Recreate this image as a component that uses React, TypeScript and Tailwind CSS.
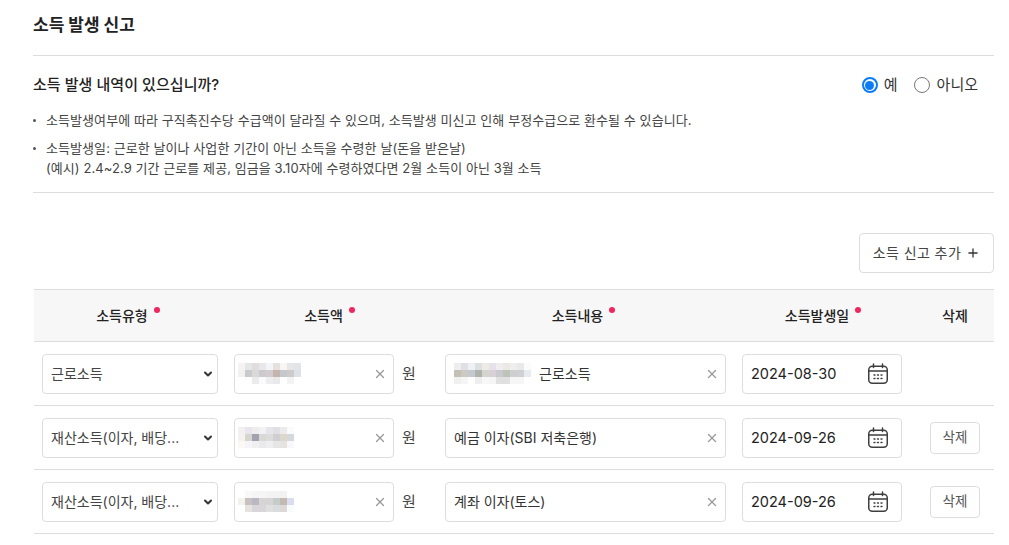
import { ChevronDown, Plus, X } from 'lucide-react';

const headers = [
  { label: '소득유형', required: true },
  { label: '소득액', required: true },
  { label: '소득내용', required: true },
  { label: '소득발생일', required: true },
  { label: '삭제', required: false },
];

const mosaic1 = [
  ['#f5f3f3', '#e5e6e8', '#e3dcdc', '#e8e8ea', '#f2f4f7', '#e6e0e0', '#f7f6f2', '#e6e6e6', '#e2e5e8'],
  ['#f3f1f0', '#c9cacb', '#d9d9da', '#cec9cd', '#d2cccf', '#c3b5ae', '#c5c9cb', '#cccccc', '#dde2e6'],
  ['#ffffff', '#fdfdfd', '#ebebee', '#fafafa', '#edecee', '#e9e8ea', '#ffffff', '#f3f3f3', '#ffffff'],
];
const mosaic2 = [
  ['#f5f0f0', '#e6e6ec', '#f0ecec', '#f0f2f5', '#e5e5ea', '#dfdfe4', '#eceaea', '#fbfbfd', '#ffffff'],
  ['#f4f2ee', '#d8d4d0', '#a3a3b0', '#d8d8d4', '#dcdcdc', '#d0d0d4', '#dcd8cc', '#d5d9dc', '#ffffff'],
  ['#fdf8f4', '#f5f5f8', '#f0f0f0', '#e8eaec', '#eeeeee', '#e6e6e6', '#e5e3e0', '#f8f8fb', '#ffffff'],
];
const mosaic3 = [
  ['#ffffff', '#f8f8f8', '#f5f5f5', '#f5f5f5', '#f3f3f3', '#f3f3f3', '#f3f1f1', '#ffffff', '#ffffff'],
  ['#f3f3ee', '#c9c0c0', '#bbb8c5', '#d8d4d4', '#d5d5d5', '#c5cdca', '#c5b9b4', '#dcdcf0', '#ffffff'],
  ['#ffffff', '#e6e2e0', '#d9d6da', '#d8d6da', '#dfe0e0', '#dadde0', '#dcd8d5', '#f8fcfc', '#ffffff'],
];
const mosaic4 = [
  ['#eeeeee', '#e0dfe6', '#eef0f4', '#dde0e0', '#ecece4', '#e6e2ec', '#eeeeee', '#ece9e4', '#eeeeee', '#e9e9e9', '#fbfbfb'],
  ['#c4c0b6', '#cdcac4', '#c3c9d0', '#aeb3ab', '#d5d5cf', '#d8d0d6', '#c9c9cf', '#bcc3b9', '#cfcfcf', '#d0d0d4', '#e8ecf0'],
  ['#f0f0f0', '#f5f5f5', '#fefefe', '#eeeeee', '#f8f8f8', '#f5f5f5', '#e0e0e0', '#e0e0e0', '#f6f6f6', '#f6f6f6', '#ffffff'],
];

const rows = [
  { type: '근로소득', amount: mosaic1, content: '근로소득', contentMosaic: true, date: '2024-08-30', deletable: false },
  { type: '재산소득(이자, 배당...', amount: mosaic2, content: '예금 이자(SBI 저축은행)', contentMosaic: false, date: '2024-09-26', deletable: true },
  { type: '재산소득(이자, 배당...', amount: mosaic3, content: '계좌 이자(토스)', contentMosaic: false, date: '2024-09-26', deletable: true },
];

function Mosaic({ cells }: { cells: string[][] }) {
  return (
    <div className="flex flex-col">
      {cells.map((row, i) => (
        <div key={i} className="flex">
          {row.map((color, j) => (
            <div key={j} className="w-[7px] h-[7px]" style={{ backgroundColor: color }} />
          ))}
        </div>
      ))}
    </div>
  );
}

function CalendarIcon() {
  return (
    <svg width="22" height="22" viewBox="0 0 22 22" fill="none" stroke="#3f3f3f" strokeWidth="1.5" strokeLinecap="round">
      <rect x="1.75" y="3.25" width="18.5" height="17" rx="3.5" />
      <path d="M2 8h18" />
      <path d="M6.5 1v3.5M15.5 1v3.5" />
      <path d="M7 12h1M10.5 12h1M14 12h1M7 15.5h1M10.5 15.5h1M14 15.5h1" strokeWidth="1.4" />
    </svg>
  );
}

function ClearIcon() {
  return <X className="w-[14px] h-[14px] text-[#999999] shrink-0" strokeWidth={2.2} />;
}

function Bullet() {
  return (
    <span className="w-[13px] h-[20px] shrink-0 flex items-center">
      <span className="w-[3px] h-[3px] rounded-full bg-[#555555]" />
    </span>
  );
}

export default function App() {
  return (
    <div className="w-[1009px] h-[545px] overflow-hidden bg-white pl-[33px] pr-[15px] font-['Inter','Noto_Sans_CJK_KR',sans-serif] text-[#333333]">
      <h2 className="h-[56px] pt-[11px] border-b border-[#dddddd] text-[17px] leading-[28px] font-bold text-[#222222]">소득 발생 신고</h2>

      <div className="flex items-center justify-between h-[28px] mt-[15px]">
        <p className="text-[15px] font-medium text-[#222222] tracking-[0.05px]">소득 발생 내역이 있으십니까?</p>
        <div className="flex items-center text-[15px] mr-[16px]">
          <span className="w-4 h-4 rounded-full border-2 border-[#0b7cf5] flex items-center justify-center">
            <span className="w-[9px] h-[9px] rounded-full bg-[#0b7cf5]" />
          </span>
          <span className="ml-[6px] mr-[16px]">예</span>
          <span className="w-4 h-4 rounded-full border border-[#777777]" />
          <span className="ml-[7px]">아니오</span>
        </div>
      </div>

      <ul className="mt-[11px] text-[13px] leading-[20px] tracking-[0.07px] text-[#444444] border-b border-[#dddddd] pb-[14px]">
        <li className="flex">
          <Bullet />
          <span>소득발생여부에 따라 구직촉진수당 수급액이 달라질 수 있으며, 소득발생 미신고 인해 부정수급으로 환수될 수 있습니다.</span>
        </li>
        <li className="flex mt-[8px]">
          <Bullet />
          <span>
            소득발생일: 근로한 날이나 사업한 기간이 아닌 소득을 수령한 날(돈을 받은날)
            <br />
            (예시) 2.4~2.9 기간 근로를 제공, 임금을 3.10자에 수령하였다면 2월 소득이 아닌 3월 소득
          </span>
        </li>
      </ul>

      <div className="flex justify-end mt-[40px]">
        <button className="h-[40px] w-[135px] flex items-center justify-center gap-[5px] border border-[#dddddd] rounded text-sm leading-[18px] pb-[1px] tracking-[0.4px] text-[#444444]">
          소득 신고 추가
          <Plus className="w-[14px] h-[14px] text-[#333333]" strokeWidth={2.2} />
        </button>
      </div>

      <table className="mt-[16px] ml-[1px] w-[960px] table-fixed border-collapse">
        <colgroup>
          <col className="w-[192px]" />
          <col className="w-[211px]" />
          <col className="w-[297px]" />
          <col className="w-[182px]" />
          <col className="w-[78px]" />
        </colgroup>
        <thead>
          <tr className="h-[52px] bg-[#f7f7f7] border-y border-[#dddddd]">
            {headers.map((h) => (
              <th key={h.label} className="text-sm font-medium text-[#222222]">
                <span className={h.required ? 'relative inline-block pr-[16px]' : 'relative inline-block'}>
                  {h.label}
                  {h.required && <span className="absolute top-[1px] right-[4px] w-[6px] h-[6px] rounded-full bg-[#f0265f]" />}
                </span>
              </th>
            ))}
          </tr>
        </thead>
        <tbody>
          {rows.map((row, i) => (
            <tr key={i} className="h-[64px] border-b border-[#dddddd]">
              <td className="pl-[8px] pr-[8px]">
                <div className="h-[40px] flex items-center justify-between pl-[8px] pr-[3px] border border-[#dddddd] rounded text-sm text-[#444444]">
                  <span className="whitespace-nowrap">{row.type}</span>
                  <ChevronDown className="w-[12px] h-[12px] text-[#333333]" strokeWidth={4} />
                </div>
              </td>
              <td className="pl-[8px]">
                <div className="flex items-center">
                  <div className="w-[160px] h-[40px] flex items-center justify-between pl-[3px] pr-[6px] border border-[#dddddd] rounded">
                    <Mosaic cells={row.amount} />
                    <ClearIcon />
                  </div>
                  <span className="ml-[8px] pt-[1px] text-[15px] text-[#444444]">원</span>
                </div>
              </td>
              <td className="pl-[8px]">
                <div className="w-[281px] h-[40px] flex items-center justify-between pl-[8px] pr-[6px] border border-[#dddddd] rounded text-sm text-[#333333]">
                  <span className="flex items-center gap-[8px]">
                    {row.contentMosaic && <Mosaic cells={mosaic4} />}
                    {row.content}
                  </span>
                  <ClearIcon />
                </div>
              </td>
              <td className="pl-[8px]">
                <div className="w-[160px] h-[40px] flex items-center justify-between pl-[8px] pr-[12px] border border-[#dddddd] rounded text-[14.5px] text-[#222222]">
                  {row.date}
                  <CalendarIcon />
                </div>
              </td>
              <td className="pl-[14px]">
                {row.deletable && (
                  <button className="w-[50px] h-[32px] border border-[#dddddd] rounded text-[13.5px] text-[#555555]">삭제</button>
                )}
              </td>
            </tr>
          ))}
        </tbody>
      </table>
    </div>
  );
}
